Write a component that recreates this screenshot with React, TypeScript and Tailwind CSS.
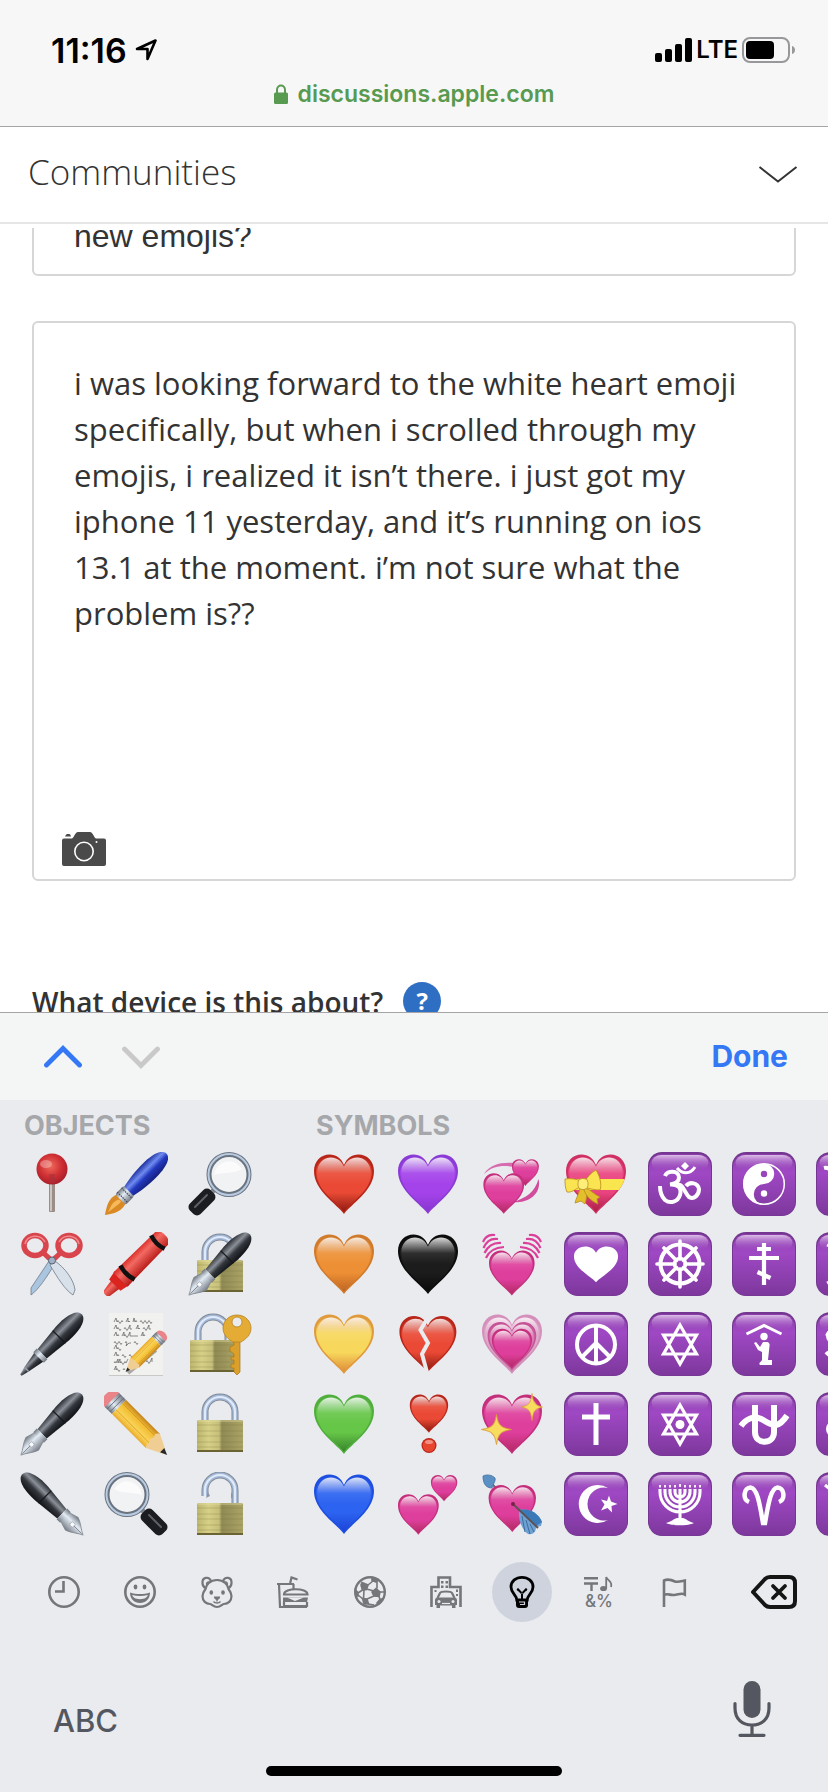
import { useState } from "react";
import type { ReactNode } from "react";

const HEART =
  "M32 62 C25 52 2 39 2 19 C2 9 9 2.5 17.5 2.5 C24 2.5 29.5 6.5 32 13 C34.5 6.5 40 2.5 46.5 2.5 C55 2.5 62 9 62 19 C62 39 39 52 32 62Z";

// [name, edge, main, bottom]
const HEART_COLORS = [
  ["red", "#b8261a", "#ea4a35", "#8f1a10"],
  ["orange", "#d07a2c", "#ed9035", "#bd6423"],
  ["yellow", "#e09a3c", "#f7d75c", "#df8d38"],
  ["green", "#4fae3c", "#66c648", "#36842a"],
  ["blue", "#1f4fe0", "#2c63f0", "#1c44d8"],
  ["purple", "#8a3bd6", "#a443ea", "#8936d2"],
  ["black", "#0c0c0c", "#1c1c1c", "#0a0a0a"],
  ["pink", "#c42f7c", "#de3e9c", "#b42a64"],
  ["pale", "#d58fbb", "#dda6c8", "#c77fa6"],
  ["mid", "#c55597", "#d873b0", "#b64a82"],
  ["rose", "#cf2f62", "#ea4480", "#a81e44"],
];

function SharedDefs() {
  return (
    <svg className="absolute h-0 w-0" aria-hidden="true">
      <defs>
        {HEART_COLORS.map(([name, edge, main, bottom]) => (
          <linearGradient key={name} id={`h-${name}`} x1="0" y1="0" x2="0" y2="1">
            <stop offset="0" stopColor={edge} />
            <stop offset=".3" stopColor={main} />
            <stop offset=".65" stopColor={main} />
            <stop offset="1" stopColor={bottom} />
          </linearGradient>
        ))}
        <linearGradient id="gloss" x1="0" y1="0" x2="0" y2="1">
          <stop offset="0" stopColor="#fff" stopOpacity=".85" />
          <stop offset=".3" stopColor="#fff" stopOpacity=".08" />
          <stop offset=".5" stopColor="#fff" stopOpacity="0" />
        </linearGradient>
        <linearGradient id="tile" x1="0" y1="0" x2="0" y2="1">
          <stop offset="0" stopColor="#8a3fa8" />
          <stop offset=".3" stopColor="#9f48c4" />
          <stop offset="1" stopColor="#7d389c" />
        </linearGradient>
        <linearGradient id="tileGloss" x1="0" y1="0" x2="0" y2="1">
          <stop offset="0" stopColor="#dcbde8" />
          <stop offset="1" stopColor="#a04ac5" stopOpacity="0" />
        </linearGradient>
        <linearGradient id="steel" x1="0" y1="0" x2="1" y2="0">
          <stop offset="0" stopColor="#6f7680" />
          <stop offset=".4" stopColor="#e3ecf5" />
          <stop offset="1" stopColor="#747a84" />
        </linearGradient>
        <linearGradient id="ink" x1="0" y1="0" x2="1" y2="0">
          <stop offset="0" stopColor="#2a2d33" />
          <stop offset=".35" stopColor="#8b9098" />
          <stop offset=".6" stopColor="#33363c" />
          <stop offset="1" stopColor="#101216" />
        </linearGradient>
        <linearGradient id="brass" x1="0" y1="0" x2="1" y2="0">
          <stop offset="0" stopColor="#bdb56f" />
          <stop offset=".25" stopColor="#d6d087" />
          <stop offset=".48" stopColor="#c6bf7a" />
          <stop offset=".54" stopColor="#8f8954" />
          <stop offset="1" stopColor="#aaa466" />
        </linearGradient>
        <linearGradient id="brushBlue" x1="0" y1="0" x2="1" y2="0">
          <stop offset="0" stopColor="#1c2f9e" />
          <stop offset=".35" stopColor="#6f8bf0" />
          <stop offset=".6" stopColor="#2238bd" />
          <stop offset="1" stopColor="#141f7c" />
        </linearGradient>
        <linearGradient id="wax" x1="0" y1="0" x2="1" y2="0">
          <stop offset="0" stopColor="#d92d26" />
          <stop offset=".35" stopColor="#f26a62" />
          <stop offset="1" stopColor="#b81b18" />
        </linearGradient>
        <linearGradient id="wood" x1="0" y1="0" x2="1" y2="0">
          <stop offset="0" stopColor="#e9a929" />
          <stop offset=".3" stopColor="#fbd65a" />
          <stop offset=".7" stopColor="#f2bd35" />
          <stop offset="1" stopColor="#c4831c" />
        </linearGradient>
        <radialGradient id="ball" cx=".45" cy=".4" r=".6">
          <stop offset="0" stopColor="#f06a5c" />
          <stop offset=".6" stopColor="#cf2f33" />
          <stop offset="1" stopColor="#a81f2a" />
        </radialGradient>
        <clipPath id="heartClip">
          <path d={HEART} />
        </clipPath>
      </defs>
    </svg>
  );
}

function Heart({ c, at }: { c: string; at?: string }) {
  const edge = HEART_COLORS.find((h) => h[0] === c)?.[1];
  return (
    <g transform={at}>
      <path d={HEART} fill={edge} />
      <path d={HEART} fill={`url(#h-${c})`} transform="translate(2.2 2.2) scale(.93)" />
      <path d={HEART} fill="url(#gloss)" transform="translate(3.5 3.2) scale(.89)" />
    </g>
  );
}

function Tile({ children }: { children?: ReactNode }) {
  return (
    <>
      <rect width="64" height="64" rx="14" fill="#743690" />
      <rect x="1" y="2" width="62" height="61.5" rx="13" fill="url(#tile)" />
      <rect x="3.5" y="3" width="57" height="16" rx="10" fill="url(#tileGloss)" />
      <g fill="none" stroke="#fff" strokeWidth="4">
        {children}
      </g>
    </>
  );
}

function Nib() {
  return (
    <>
      <path d="M26 50 H38 L41 60 C39 66 34 71 32 76 C30 71 25 66 23 60Z" fill="url(#steel)" stroke="#7b7f85" strokeWidth=".7" />
      <circle cx="32" cy="61" r="2.5" fill="#f8fafc" stroke="#8d9299" strokeWidth=".6" />
      <path d="M32 63 V74" stroke="#7b7f85" strokeWidth=".8" />
    </>
  );
}

function PenBody({ end = 50 }: { end?: number }) {
  return (
    <>
      <path d="M23 22 C21 6 24 -10 32 -10 C40 -10 43 6 41 22Z" fill="url(#ink)" />
      <path d={`M23 22 H41 L38.5 ${end - 4} H25.5Z`} fill="url(#ink)" />
      <path d="M23 22 H41" stroke="#14161a" strokeWidth="1.2" />
      <path d={`M24.5 ${end - 4} H39.5 V${end + 1} H24.5Z`} fill="url(#steel)" />
    </>
  );
}

function FountainPen() {
  return (
    <g transform="rotate(45 32 32)">
      <Nib />
      <PenBody />
    </g>
  );
}

function Padlock({ top = 28 }: { top?: number }) {
  return (
    <>
      <rect x="9" y={top} width="46" height="32" rx="1.5" fill="url(#brass)" />
      <path d={`M9 ${top + 5} H55 M9 ${top + 11} H55 M9 ${top + 16} H55 M9 ${top + 22} H55 M9 ${top + 27} H55`} stroke="#77713c" strokeOpacity=".28" />
      <path d={`M9 ${top + 31} H55`} stroke="#6b6334" strokeWidth="2" />
      <path d={`M10 ${top + 1} H54`} stroke="#e8e3ac" strokeOpacity=".7" />
    </>
  );
}

function Shackle({ d = "M17 28 V20 A15 15 0 0 1 47 20 V28" }: { d?: string }) {
  return (
    <g fill="none">
      <path d={d} stroke="#828a96" strokeWidth="7" />
      <path d={d} stroke="#a3b7d6" strokeWidth="5" />
      <path d={d} stroke="#dfeafa" strokeWidth="2.2" />
    </g>
  );
}

function Magnifier() {
  return (
    <>
      <path d="M29 35 L23 41" stroke="#85898f" strokeWidth="5" />
      <rect x="24.5" y="43" width="15" height="29" rx="5" fill="#1b1d21" transform="rotate(45 32 32)" />
      <path d="M19 43 L7 55" stroke="#5d6066" strokeWidth="2" strokeLinecap="round" />
      <circle cx="41" cy="22.5" r="20" fill="#f1f2f4" stroke="#6a7380" strokeWidth="5" />
      <circle cx="41" cy="22.5" r="20.5" fill="none" stroke="#b9cbe0" strokeWidth="2" />
      <path d="M26 23 A15 15 0 0 1 54 17 C46 22 34 20 26 23Z" fill="#fff" opacity=".7" />
    </>
  );
}

function Pencil() {
  return (
    <>
      <path d="M22 -1 V-3 C22 -13 42 -13 42 -3 V-1Z" fill="#e98489" />
      <path d="M22 -2 H42 V8 H22Z" fill="url(#steel)" />
      <path d="M22 1 H42 M22 5 H42" stroke="#5b6068" strokeWidth=".8" />
      <path d="M22 8 H42 V56 L37 58 L32 56 L27 58 L22 56Z" fill="url(#wood)" />
      <path d="M28 8 V56 M37 8 V56" stroke="#d4951f" strokeWidth=".8" />
      <path d="M22 56 C26 52 28 56 30 53 C32 51 35 56 37 53 C39 52 41 54 42 56 L34 72 H30Z" fill="#f0cd92" />
      <path d="M29 69 H35 L32 76Z" fill="#26282c" />
    </>
  );
}

const OBJECTS: [string, ReactNode][] = [
  [
    "Round pushpin",
    <>
      <rect x="29" y="28" width="6" height="32" rx="1" fill="#9b8d88" />
      <path d="M31 30 V59" stroke="#e0d7d2" strokeWidth="1.5" />
      <circle cx="32" cy="17" r="15.5" fill="url(#ball)" />
      <ellipse cx="26" cy="12" rx="6" ry="4" fill="#fff" opacity=".3" />
      <path d="M29 22 H35 V31 H29Z" fill="#a8303b" opacity=".6" />
    </>,
  ],
  [
    "Scissors",
    <>
      <path d="M29 29 L11 56 L11 63 C18 58 27 45 34 33Z" fill="#a9c5df" stroke="#717b88" strokeWidth=".8" />
      <path d="M35 29 C45 36 54 48 55 58 L53 63 C45 58 37 45 30 33Z" fill="#d8e0ea" stroke="#717b88" strokeWidth=".8" />
      <g fill="none" stroke="#d9454d" strokeWidth="5.5">
        <ellipse cx="15" cy="13.5" rx="11" ry="10" />
        <ellipse cx="49" cy="13.5" rx="11" ry="10" />
        <path d="M23 20 C26 24 28 25 30 27 M41 20 C38 24 36 25 34 27" strokeWidth="5" />
      </g>
      <g fill="none" stroke="#f08a8d" strokeWidth="1.5">
        <path d="M5 12 C7 3 20 1 25 10 M39 10 C44 1 57 3 59 12" />
      </g>
      <circle cx="32" cy="28.5" r="3.5" fill="#9fb2c8" stroke="#5c6572" />
    </>,
  ],
  [
    "Pen",
    <g transform="rotate(45 32 32)">
      <path d="M25.5 50 H38.5 L35 68 L33 76 H31 L29 68Z" fill="url(#ink)" />
      <path d="M29 68 H35" stroke="#999fa8" strokeWidth="1.5" />
      <PenBody />
    </g>,
  ],
  ["Fountain pen", <FountainPen />],
  ["Black nib", <g transform="matrix(-1 0 0 1 64 0)"><FountainPen /></g>],
  [
    "Paintbrush",
    <g transform="rotate(45 32 32)">
      <path d="M26 44 C20 18 21 -11 32 -11 C43 -11 44 18 38 44Z" fill="url(#brushBlue)" />
      <path d="M26 52 C22 62 27 68 32 76 C37 68 42 62 38 52Z" fill="#d98a25" />
      <path d="M31 55 C27 62 31 66 32 72 C33 66 34 60 34 55Z" fill="#f6b95a" />
      <rect x="24.5" y="42" width="15" height="12" rx="2" fill="url(#steel)" />
      <path d="M24.5 45 H39.5 M24.5 51 H39.5" stroke="#4b4f57" strokeWidth="1.2" strokeDasharray="1.5 1" />
    </g>,
  ],
  [
    "Crayon",
    <g transform="rotate(45 32 32)">
      <path d="M26 60 H38 L36 74 C34 76 30 76 28 74Z" fill="url(#wax)" />
      <path d="M22 52 H42 L40 62 H24Z" fill="#d9241f" />
      <path d="M23 -6 C25 -10 39 -10 41 -6 L42 54 H22Z" fill="url(#wax)" />
      <path d="M22.5 1 C28 3 36 3 41.5 1 M22 44 C28 46 36 46 42 44" stroke="#111" strokeWidth="4.5" fill="none" />
    </g>,
  ],
  [
    "Memo",
    <>
      <rect x="5" y="1" width="54" height="63" fill="#f1f1ef" />
      <path d="M5 63.5 H59" stroke="#c9c9c7" />
      <g fill="none" stroke="#5a5a5c" strokeWidth=".7">
        <path d="M10 10 l2 -4 l1 4 q1 -3 2 0 t2 0 t2 0 m3 0 l2 -4 l0 4 q1 -2 2 0 m3 0 l1 -4 l1 4 q1 -3 2 0 m3 0 q1 -3 2 0 t2 0 t2 0 t2 0 t2 0 t2 0" />
        <path d="M10 17 l2 -4 l1 4 q1 -3 2 0 t2 0 m3 0 q1 -3 2 0 t2 0 l2 -4 l0 4 t2 0 m4 0 l2 -4 l0 4 q1 -2 2 0 m3 0 q1 -3 2 0 t2 0 l2 -4 l0 4 t2 0" />
        <path d="M10 24 l2 -4 l1 4 q1 -3 2 0 m3 0 l2 -4 l0 4 q1 -3 2 0 t2 0 l2 -4 l0 4 t2 0 t2 0 t2 0 t2 0 m3 0 l2 -4 l0 4 q1 -3 2 0" />
        <path d="M10 31 q1 -3 2 0 t2 0 t2 0 t2 0 m3 0 q1 -3 2 0 l-1 3 l3 -3 t2 0 m3 0 q1 -3 2 0 t2 0" />
        <path d="M10 37 l2 -4 l1 4 q1 -3 2 0 t2 0" />
        <path d="M10 44 l2 -4 l1 4 q1 -3 2 0 m3 0 q1 -3 2 0 t2 0 m3 0 q1 -3 2 0 t2 0" />
        <path d="M10 51 q1 -3 2 0 l2 -4 l0 4 l2 -4 l0 4 q1 -3 2 0 t2 0 t2 0 l2 -4 M42 50 q1 -3 2 0 t2 0 l2 -4 l0 4" />
        <path d="M10 58 l2 -4 l0 4 q1 -3 2 0 t2 0 m3 0 q1 -3 2 0" />
      </g>
      <path d="M24 61 L52 38" stroke="#000" strokeOpacity=".3" strokeWidth="4" />
      <g transform="translate(41.5 40) rotate(45) scale(.64) translate(-32 -32)">
        <Pencil />
      </g>
    </>,
  ],
  ["Pencil", <g transform="rotate(-45 32 32)"><Pencil /></g>],
  ["Magnifying glass, left", <g transform="matrix(-1 0 0 1 64 0)"><Magnifier /></g>],
  ["Magnifying glass, right", <Magnifier />],
  [
    "Locked with pen",
    <>
      <Shackle />
      <Padlock />
      <FountainPen />
    </>,
  ],
  [
    "Locked with key",
    <>
      <g transform="translate(-7 0)">
        <Shackle />
        <Padlock />
      </g>
      <path d="M46 28 H52 V60 L49 63 L46 60 V56 H43 V52 H46 V48 H43 V45 H46 V42 L42 39 V35 L46 33Z" fill="#dba02c" stroke="#a9761a" strokeWidth=".7" />
      <path d="M49 3 C58 3 63 10 63 16 C63 23 58 27 53 30 H45 C40 27 35 23 35 16 C35 10 40 3 49 3Z M49 5 A5 5 0 1 0 49 15 A5 5 0 1 0 49 5Z" fill="#e5ac35" fillRule="evenodd" stroke="#b98220" strokeWidth=".8" />
    </>,
  ],
  [
    "Locked",
    <>
      <Shackle />
      <Padlock />
    </>,
  ],
  [
    "Unlocked",
    <>
      <Shackle d="M17 24 V18 A15 15 0 0 1 47 18 V31" />
      <path d="M20 20 l2 4 l-4 2Z M43 20 l2 4 l-2 3Z" fill="#8b95a3" />
      <Padlock top={31} />
    </>,
  ],
];

const STAR_OF_DAVID = "M32 13 L48.5 42 H15.5Z M32 52 L15.5 23 H48.5Z";
const SPARK = "M0 -15 C2 -4 4 -2 15 0 C4 2 2 4 0 15 C-2 4 -4 2 -15 0 C-4 -2 -2 -4 0 -15Z";

const SYMBOLS: [string, ReactNode][] = [
  ["Red heart", <Heart c="red" />],
  ["Orange heart", <Heart c="orange" />],
  ["Yellow heart", <Heart c="yellow" />],
  ["Green heart", <Heart c="green" />],
  ["Blue heart", <Heart c="blue" />],
  ["Purple heart", <Heart c="purple" />],
  ["Black heart", <Heart c="black" />],
  [
    "Broken heart",
    <>
      <Heart c="red" at="translate(1.5 1.5) scale(.95)" />
      <path d="M31 7 L24.5 18 L32 31 L26 42 L31.5 62" fill="none" stroke="#e9ebef" strokeWidth="4" />
    </>,
  ],
  [
    "Heart exclamation",
    <>
      <Heart c="red" at="translate(12.5 1) scale(.64)" />
      <circle cx="33" cy="53.5" r="7.5" fill="#b8261a" />
      <circle cx="33" cy="53.5" r="6.3" fill="#e8452f" />
      <ellipse cx="33" cy="50" rx="4" ry="2" fill="#fff" opacity=".4" />
    </>,
  ],
  [
    "Two hearts",
    <>
      <Heart c="pink" at="translate(.6 20.5) scale(.68)" />
      <Heart c="pink" at="translate(34 2) scale(.44)" />
    </>,
  ],
  [
    "Revolving hearts",
    <>
      <path d="M4 22 C10 12 22 10 34 11 V15 C22 13 13 14 4 22Z" fill="#d66cae" />
      <path d="M58.5 27 C62 40 50 52 33 50 C46 46 55 40 58.5 27Z" fill="#d24b9c" />
      <Heart c="pink" at="translate(31 6) scale(.45)" />
      <Heart c="pink" at="translate(2 19.5) scale(.68)" />
    </>,
  ],
  [
    "Beating heart",
    <>
      <g fill="none" stroke="#dc3f9a" strokeWidth="2.2">
        <path d="M3 10 C5 5 9 2 15 3 M3.5 16 C6 10 11 6 18 7 M4.5 21 C8 14 13 10.5 21 11 M6 26 C9 19 14 15.5 24 15" />
        <path d="M61 10 C59 5 55 2 49 3 M60.5 16 C58 10 53 6 46 7 M59.5 21 C56 14 51 10.5 43 11 M58 26 C55 19 50 15.5 40 15" />
      </g>
      <Heart c="pink" at="translate(7.5 16.5) scale(.76)" />
    </>,
  ],
  [
    "Growing heart",
    <>
      <Heart c="pale" />
      <Heart c="mid" at="translate(6 8) scale(.81)" />
      <Heart c="pink" at="translate(10.5 15) scale(.67)" />
    </>,
  ],
  [
    "Sparkling heart",
    <>
      <Heart c="pink" />
      <g fill="#f7dc5e" stroke="#d79a3a" strokeWidth=".9">
        <path d={SPARK} transform="translate(16.5 37.5)" />
        <path d={SPARK} transform="translate(52 15) scale(.7 .9)" />
      </g>
    </>,
  ],
  [
    "Heart with arrow",
    <>
      <path d="M9 9 L20 20" stroke="#6a6c73" strokeWidth="2" />
      <path d="M3 4 C7 2 12 3 15 6 C16 9 13 12 12 16 C7 16 3 13 3 4Z" fill="#5b90c4" stroke="#3f6f9f" strokeWidth=".8" />
      <Heart c="pink" at="translate(7 11) scale(.79)" />
      <path d="M39 38 C48 36 58 40 62 50 L61 54 L56 55 C56 60 53 63 48 62 C42 58 38 48 39 38Z" fill="#6fa2d2" />
      <path d="M39 38 C48 36 58 40 62 50 L56 54Z" fill="#3b7ab9" />
      <path d="M42 44 L45 60 M46 48 L50 62 M50 52 L54 60" stroke="#3b6d9f" strokeWidth="1" />
      <path d="M33 32 L58 56" stroke="#5c5257" strokeWidth="2" />
      <circle cx="33" cy="32" r="2" fill="#7d1f48" />
    </>,
  ],
  [
    "Heart with ribbon",
    <>
      <Heart c="rose" />
      <path d="M0 27 H64 V38 H0Z" fill="#f9e54e" clipPath="url(#heartClip)" />
      <g fill="#e3bf2c" stroke="#b98a1e" strokeWidth=".8">
        <path d="M16 36 C15 42 12 46 11 51 L17 49 L21 52 C23 46 23 41 22 36Z" />
        <path d="M22 36 C27 38 31 43 36 45 L33 47 L34 52 C27 49 22 44 20 38Z" />
        <path d="M17 34 C12 37 7 41 3 40 C1 36 1 31 1 27 C7 26 12 27 17 29Z" fill="#fae452" />
        <path d="M21 29 C24 24 28 20 32 18 C36 24 38 33 36 38 C31 38 26 37 21 35Z" fill="#fae452" />
        <rect x="14" y="26.5" width="10" height="11" rx="4" fill="#fdee7a" />
      </g>
    </>,
  ],
  ["Heart decoration", <Tile><path d={HEART} fill="#fff" stroke="none" transform="translate(8.5 13) scale(.735 .6)" /></Tile>],
  [
    "Peace",
    <Tile>
      <circle cx="32" cy="32.5" r="19" />
      <path d="M32 13 V52 M32 31 L18 45 M32 31 L46 45" />
    </Tile>,
  ],
  ["Latin cross", <Tile><path d="M32 11 V53 M18 25 H46" strokeWidth="5" /></Tile>],
  [
    "Star and crescent",
    <Tile>
      <path d="M44 16 A19 19 0 1 0 44 48 A16.5 16.5 0 1 1 44 16Z M45 23.5 L47 29.5 L53.5 32 L47.5 34 L48 40.5 L43.5 36 L37 38.5 L40.5 32.5 L37 27.5 L43 29Z" fill="#fff" stroke="none" />
    </Tile>,
  ],
  [
    "Om",
    <Tile>
      <path d="M17 24 C19 18 31 18 31 25.5 C31 31 26 32 22 32.5 C30 32 34 36 32 43 C30 50 22 52 17 48 C13 44 12 39 12 34" />
      <path d="M30 33 C34 31 37 41 41 45 C46 48 51 43 51 37 C50 31 42 29 38 34" />
      <path d="M29 16 C34 22 42 23 47 15" strokeWidth="3" />
      <path d="M37 10 L41 14 L37 18 L33 14Z" fill="#fff" stroke="none" />
    </Tile>,
  ],
  [
    "Wheel of dharma",
    <Tile>
      <circle cx="32" cy="32" r="19.5" />
      <circle cx="32" cy="32" r="5.5" strokeWidth="3.5" />
      <path d="M32 9 V27 M32 37 V55 M9 32 H27 M37 32 H55 M16 16 L28.5 28.5 M35.5 35.5 L48 48 M48 16 L35.5 28.5 M28.5 35.5 L16 48" strokeWidth="3.6" strokeLinecap="round" />
    </Tile>,
  ],
  ["Star of David", <Tile><path d={STAR_OF_DAVID} strokeWidth="3.2" /></Tile>],
  [
    "Six pointed star",
    <Tile>
      <path d={STAR_OF_DAVID} strokeWidth="3.2" />
      <circle cx="32" cy="32.5" r="4.5" fill="#fff" stroke="none" />
    </Tile>,
  ],
  [
    "Menorah",
    <Tile>
      <path d="M12 17 V20 A20 20 0 0 0 52 20 V17 M17 17 V20 A15 15 0 0 0 47 20 V17 M22 17 V20 A10 10 0 0 0 42 20 V17 M27 17 V20 A5 5 0 0 0 37 20 V17 M32 17 V48" strokeWidth="3.1" />
      <path d="M12 13 V15.5 M17 13 V15.5 M22 13 V15.5 M27 13 V15.5 M32 12 V15 M37 13 V15.5 M42 13 V15.5 M47 13 V15.5 M52 13 V15.5" strokeWidth="1.8" />
      <path d="M18 51 C23 50 27 46 29 46 H35 C37 46 41 50 46 51 C41 54 23 54 18 51Z" fill="#fff" stroke="none" />
    </Tile>,
  ],
  [
    "Yin yang",
    <Tile>
      <circle cx="32" cy="32" r="20.3" strokeWidth="1.5" />
      <path d="M32 11.5 A20.5 20.5 0 0 0 32 52.5 A10.25 10.25 0 0 1 32 32 A10.25 10.25 0 0 0 32 11.5Z" fill="#fff" stroke="none" />
      <circle cx="32" cy="22" r="3.2" fill="#9845ba" stroke="none" />
      <circle cx="32" cy="41.5" r="3.2" fill="#fff" stroke="none" />
    </Tile>,
  ],
  ["Orthodox cross", <Tile><path d="M32 11 V53 M25 17 H39 M17 26 H47 M25.5 40 L38.5 46" strokeWidth="4.2" /></Tile>],
  [
    "Place of worship",
    <Tile>
      <path d="M14.5 22 L32 13.5 L49.5 22" strokeWidth="3" />
      <circle cx="32" cy="24.5" r="3.7" fill="#fff" stroke="none" />
      <path d="M31 30 H35 C37 30 38 32 37.5 34 L36 48 H40 V53 H28 C26 51 29 50 30 48 L30 40 L26 38 L22 31 L24 30 L28 35Z" fill="#fff" stroke="none" />
    </Tile>,
  ],
  [
    "Ophiuchus",
    <Tile>
      <path d="M23 13 V40 C23 53 42 53 42 40 V13" strokeWidth="6" />
      <path d="M9 34 C14 27 21 24 28 26.5 C34 29 38 33.5 44 33 C49 32 52 28 55 23.5" strokeWidth="6" />
    </Tile>,
  ],
  [
    "Aries",
    <Tile>
      <path d="M17 30 C10 27 12 15.5 18.5 15.5 C25.5 16 28 34 31 51 H33 C36 34 38.5 16 45.5 15.5 C52 15.5 54 27 47 30" strokeWidth="4.5" />
    </Tile>,
  ],
  [
    "Taurus",
    <Tile>
      <path d="M8 16 C16 14 18 26 32 26 C46 26 48 14 56 16" />
      <circle cx="32" cy="39" r="13" />
    </Tile>,
  ],
  ["Gemini", <Tile><path d="M11 13 C22 18 42 18 53 13 M11 51 C22 46 42 46 53 51 M24 17 V47 M40 17 V47" strokeWidth="3" /></Tile>],
  [
    "Cancer",
    <Tile>
      <path d="M53 20 C42 11 16 12 11 24 M10 40 C22 53 50 52 53 39" />
      <circle cx="18" cy="24" r="6" />
      <circle cx="46" cy="39" r="6" />
    </Tile>,
  ],
  [
    "Leo",
    <Tile>
      <circle cx="18.5" cy="37" r="6.5" />
      <path d="M24 34 C20 26 20 14 31 13 C46 13 42 30 38 40 C35 52 45 54 50 46" />
    </Tile>,
  ],
  ["Virgo", <Tile><path d="M9 13 L15 18 V46 M15 22 C18 12 26 14 26 20 V46 M26 22 C29 12 37 14 37 20 V44 C38 50 44 52 50 54 M37 26 C46 16 54 28 48 36 C44 44 38 48 32 52" strokeWidth="3" /></Tile>],
];

const CATEGORIES: [string, ReactNode][] = [
  [
    "Recent",
    <>
      <circle cx="16" cy="16" r="14.7" />
      <path d="M15.5 5 V15.5 H7" />
    </>,
  ],
  [
    "Smileys",
    <>
      <circle cx="16" cy="16" r="14.7" />
      <g fill="currentColor" stroke="none">
        <ellipse cx="11.5" cy="11" rx="1.9" ry="2.4" />
        <ellipse cx="20.5" cy="11" rx="1.9" ry="2.4" />
        <path d="M6 16.5 C12 18.5 20 18.5 26 16.5 C26 23 21.5 27 16 27 C10.5 27 6 23 6 16.5Z M8.2 19 C9 21.5 11 23 16 23.2 C21 23 23 21.5 23.8 19 C19 20.2 13 20.2 8.2 19Z" fillRule="evenodd" />
      </g>
    </>,
  ],
  [
    "Animals",
    <g strokeWidth="2.2">
      <path d="M10 5 C8 0 1 1 1.5 7 C1.5 9 2.5 11 4.5 12 M22 5 C24 0 31 1 30.5 7 C30.5 9 29.5 11 27.5 12" />
      <path d="M6 9 C5 8 6 5.5 8.5 6 M26 9 C27 8 26 5.5 23.5 6" strokeWidth="1.5" />
      <path d="M16 4 C9 4 5 9 4.5 13 C3 15 1.5 17 1.5 20 C1.5 25 5 28 9 28 C11 28 12 31 16 31 C20 31 21 28 23 28 C27 28 30.5 25 30.5 20 C30.5 17 29 15 27.5 13 C27 9 23 4 16 4Z" />
      <g fill="currentColor" stroke="none">
        <ellipse cx="10.3" cy="16.5" rx="1.8" ry="2.3" />
        <ellipse cx="22" cy="16.5" rx="1.8" ry="2.3" />
        <path d="M13 20.5 H19 C19.5 22.5 17 24 16 24 C15 24 12.5 22.5 13 20.5Z" />
      </g>
      <path d="M16 23 V25.5 M12.5 25.5 C14 27.5 18 27.5 19.5 25.5" strokeWidth="1.4" />
    </g>,
  ],
  [
    "Food",
    <g strokeWidth="2.2">
      <path d="M0 8 H17 M2 8 L3 31 H30 M13 8 L14.5 1.5 L20.5 3.5 M16.5 8 V13" />
      <path d="M7 18.5 C7 11.5 30.5 11.5 30.5 18.5 Z" />
      <path d="M6 21.5 H31 L30 26 H6Z" fill="currentColor" stroke="none" />
      <path d="M10 21.5 L18 25 L27 21.5Z" fill="#e9ebef" stroke="none" />
      <path d="M7 26 V30 H30 V26" />
    </g>,
  ],
  [
    "Activity",
    <g strokeWidth="1.6">
      <circle cx="16" cy="16" r="14.8" strokeWidth="2.4" />
      <g fill="currentColor">
        <path d="M18 16 L22 12.5 L26 16 L25 20.5 L20 20Z M8 6.5 L14 9 L12.5 13.5 L8.5 14 L7 9Z M8.5 22.5 L13 23 L14.5 28 L10 28Z M18 1.5 L24 3.5 L22 6 L18 4.5Z M1.5 14 L4 16.5 L4 20 L2 20Z M23 27 L26 23.5 L28 23 L25 28Z" />
      </g>
      <path d="M14 9 L19 5 M12.5 13 L20 15 M8.5 14 L4 17 M10 14 L9.5 23 M4 19 L9 23 M13 23 L20 20 M23 12.5 V5 M26 16 H30 M25 20 L26 24 M14 28 L20 29" />
    </g>,
  ],
  [
    "Travel",
    <>
      <path d="M1.5 31 V11 H8.5 V1.5 H20 V11 H30.5 V31" />
      <path d="M11 5 h2.5 v2.5 h-2.5Z M15.5 5 h2.5 v2.5 h-2.5Z M11 9.5 h2.5 v2.5 h-2.5Z M15.5 9.5 h2.5 v2.5 h-2.5Z M4.5 14 h2 v2 h-2Z M26 13.5 h2 v2.5 h-2Z M26 18 h2 v2 h-2Z" fill="currentColor" stroke="none" />
      <path d="M7.5 22 L10 17 C11 15 21 15 22 17 L24.5 22" strokeWidth="2.2" />
      <path d="M5 24 C5 22 7 21.5 8 21.5 H24 C25 21.5 27 22 27 24 V29 H25.5 V32 H22 V29.5 H10 V32 H6.5 V29 H5Z" fill="currentColor" stroke="none" />
      <circle cx="9" cy="25.5" r="1.5" fill="#e9ebef" stroke="none" />
      <circle cx="23" cy="25.5" r="1.5" fill="#e9ebef" stroke="none" />
      <path d="M12 27.5 H20" stroke="#e9ebef" strokeWidth="1.2" />
    </>,
  ],
  [
    "Objects",
    <>
      <path d="M10.8 24 C10.8 19 5 17.5 5 11 C5 5 10 1.3 16 1.3 C22 1.3 27 5 27 11 C27 17.5 21.2 19 21.2 24Z" strokeWidth="2.8" />
      <path d="M10 23 H22 V29 C22 31 21 32 19 32 H13 C11 32 10 31 10 29Z" fill="currentColor" stroke="none" />
      <path d="M13 26 H18.5 V28.5 H14" stroke="#ced3dd" strokeWidth="1.2" />
      <path d="M16 23 V17.5 M12 13.5 L15.5 17 M20 13.5 L16.5 17" strokeWidth="2" />
      <circle cx="12" cy="13.5" r="1.2" fill="currentColor" stroke="none" />
      <circle cx="20" cy="13.5" r="1.2" fill="currentColor" stroke="none" />
    </>,
  ],
  [
    "Symbols",
    <>
      <path d="M1 2.2 H15 M1 7.5 H15 M8.5 7.5 V15" strokeWidth="2.4" />
      <ellipse cx="20.5" cy="12.5" rx="3.4" ry="2.6" fill="currentColor" stroke="none" />
      <path d="M23.2 12.5 V1 C24 4.5 30 5 28 11" strokeWidth="1.8" />
      <text x="16" y="31" textAnchor="middle" fontSize="17" fontFamily="Inter, sans-serif" fontWeight="500" fill="currentColor" stroke="none">
        &amp;%
      </text>
    </>,
  ],
  [
    "Flags",
    <path d="M5 31 V4.5 C9 2.5 13 4 16 5.5 C19 6.5 23 5 25.8 4.5 V18.5 C22 16.5 19 19 15 19 C11 19.5 9 17 5 19" />,
  ],
];

function EmojiGroup({ title, items }: { title: string; items: [string, ReactNode][] }) {
  return (
    <section className="flex shrink-0 flex-col gap-2">
      <h2 className="px-1 text-[27px] leading-9 font-bold text-[#a6a7aa]">{title}</h2>
      <div className="grid grid-flow-col grid-rows-5 gap-x-5 gap-y-4">
        {items.map(([label, art]) => (
          <button key={label} type="button" aria-label={label} className="h-16 w-16">
            <svg viewBox="0 0 64 64" className="h-16 w-16">
              {art}
            </svg>
          </button>
        ))}
      </div>
    </section>
  );
}

function StatusBar() {
  return (
    <header className="border-b border-[#a5a5a7] bg-[#f7f7f7] pt-[30px] pb-4">
      <div className="flex h-10 items-center justify-between pr-8 pl-[51px]">
        <div className="flex items-center gap-2 text-[34px] font-semibold text-black">
          11:16
          <svg viewBox="0 0 22 22" className="h-[22px] w-[22px]">
            <path d="M20.5 1.5 L12.5 20 V10 H2Z" fill="none" stroke="#000" strokeWidth="2.6" strokeLinejoin="round" />
          </svg>
        </div>
        <div className="flex items-center gap-1 text-2xl font-semibold text-black">
          <svg viewBox="0 0 37 24" className="h-6 w-[37px]">
            <rect x="0" y="15" width="7" height="9" rx="2" />
            <rect x="10" y="11" width="7" height="13" rx="2" />
            <rect x="20" y="6" width="7" height="18" rx="2" />
            <rect x="30" y="0" width="7" height="24" rx="2" />
          </svg>
          LTE
          <svg viewBox="0 0 54 26" className="h-[26px] w-[54px]">
            <rect x="1" y="1" width="46" height="24" rx="7" fill="none" stroke="#98989a" strokeWidth="2" />
            <rect x="4" y="4" width="28" height="18" rx="4" />
            <path d="M50 9 C54 10 54 16 50 17Z" fill="#98989a" />
          </svg>
        </div>
      </div>
      <div className="mt-2 flex h-8 items-center justify-center gap-2.5 text-[23px] font-semibold text-[#579a50]">
        <svg viewBox="0 0 14 20" className="h-5 w-3.5">
          <rect x="0" y="8.5" width="14" height="11.5" rx="1.5" fill="currentColor" />
          <path d="M3 9.5 V6 C3 0 11 0 11 6 V9.5" fill="none" stroke="currentColor" strokeWidth="2" />
        </svg>
        discussions.apple.com
      </div>
    </header>
  );
}

export default function App() {
  const [category, setCategory] = useState("Objects");

  return (
    <div className="flex min-h-screen flex-col overflow-hidden bg-white font-[Inter,'Liberation_Sans',sans-serif]">
      <SharedDefs />
      <StatusBar />

      <div className="flex h-[97px] items-center justify-between border-b-2 border-[#e6e6e6] pr-[30px] pl-7 font-['Open_Sans',sans-serif]">
        <h1 className="pb-1 text-[35px] font-light text-[#333]">Communities</h1>
        <button type="button" aria-label="Show communities menu">
          <svg viewBox="0 0 40 20" className="h-5 w-10">
            <path d="M1.5 2 L20 16.5 L38.5 2" fill="none" stroke="#333" strokeWidth="2" />
          </svg>
        </button>
      </div>

      <main className="flex flex-col px-8 pt-1 font-['Open_Sans',sans-serif] text-[#333]">
        <div className="flex h-12 flex-col justify-end overflow-hidden">
          <textarea
            aria-label="Question title"
            defaultValue="new emojis?"
            rows={1}
            className="block w-full shrink-0 resize-none overflow-hidden rounded-md border-2 border-[#d6d6d6] px-10 pt-10 pb-[18px] font-['Liberation_Sans',sans-serif] text-[32px] leading-[40px] outline-none"
          />
        </div>

        <div className="mt-[45px] rounded-md border-2 border-[#d6d6d6] pb-[13px]">
          <textarea
            aria-label="Question details"
            rows={10}
            className="block w-full resize-none overflow-hidden px-10 pt-[37px] text-[31px] leading-[46px] outline-none"
            defaultValue="i was looking forward to the white heart emoji specifically, but when i scrolled through my emojis, i realized it isn’t there. i just got my iphone 11 yesterday, and it’s running on ios 13.1 at the moment. i’m not sure what the problem is??"
          />
          <button type="button" aria-label="Add image" className="mt-3 ml-7 block">
            <svg viewBox="0 0 44 34" className="h-[34px] w-11">
              <path d="M2 6.5 H10 C12 6 13 0 16 0 H28 C31 0 32 6 34 6.5 H42 Q44 6.5 44 8.5 V32 Q44 34 42 34 H2 Q0 34 0 32 V8.5 Q0 6.5 2 6.5Z" fill="#4a4a4a" />
              <path d="M3 4.5 Q4 2 5 2 H7.5 Q8.5 2 9 4.5Z" fill="#4a4a4a" />
              <circle cx="22" cy="19.5" r="9.2" fill="none" stroke="#fff" strokeWidth="1.6" />
              <circle cx="34.5" cy="10" r="1" fill="#fff" />
            </svg>
          </button>
        </div>

        <div className="mt-[101px] flex h-[30px] items-start gap-5 overflow-hidden">
          <h2 className="text-[28px] leading-[40px] font-semibold">What device is this about?</h2>
          <button
            type="button"
            aria-label="Help"
            className="h-[38px] w-[38px] shrink-0 rounded-full bg-[#2e6fc4] text-2xl leading-[38px] font-bold text-white"
          >
            ?
          </button>
        </div>
      </main>

      <div className="flex h-[88px] items-center border-t border-[#a5a5a7] bg-[#f4f5f5] pr-10 pl-11">
        <button type="button" aria-label="Previous field">
          <svg viewBox="0 0 38 24" className="h-6 w-[38px]">
            <path d="M2.5 20 L19 3.5 L35.5 20" fill="none" stroke="#3478f6" strokeWidth="4.8" strokeLinecap="round" />
          </svg>
        </button>
        <button type="button" aria-label="Next field" className="ml-10">
          <svg viewBox="0 0 38 24" className="h-6 w-[38px]">
            <path d="M2.5 4 L19 20.5 L35.5 4" fill="none" stroke="#c9c9c9" strokeWidth="4.8" strokeLinecap="round" />
          </svg>
        </button>
        <button type="button" className="ml-auto text-[30px] font-bold text-[#3478f6]">
          Done
        </button>
      </div>

      <div className="flex grow flex-col bg-[#e9ebef] pt-2 pb-4">
        <div className="flex gap-[60px] overflow-hidden pl-5">
          <EmojiGroup title="OBJECTS" items={OBJECTS} />
          <EmojiGroup title="SYMBOLS" items={SYMBOLS} />
        </div>

        <div className="mt-[26px] flex items-center gap-[46px] pr-[31px] pl-[34px]">
          <nav className="flex grow justify-between">
            {CATEGORIES.map(([label, art]) => (
              <button
                key={label}
                type="button"
                aria-label={label}
                onClick={() => setCategory(label)}
                className={`flex h-15 w-15 items-center justify-center rounded-full ${
                  category === label ? "bg-[#ced3dd] text-black" : "text-[#757679]"
                }`}
              >
                <svg viewBox="0 0 32 32" className="h-8 w-8 overflow-visible" fill="none" stroke="currentColor" strokeWidth="2.6">
                  {art}
                </svg>
              </button>
            ))}
          </nav>
          <button type="button" aria-label="Delete">
            <svg viewBox="0 0 46 34" className="h-[34px] w-[46px]" fill="none" stroke="#151515" strokeLinejoin="round">
              <path d="M2 17 L14 4 Q16 2 19 2 H38 Q44 2 44 8 V26 Q44 32 38 32 H19 Q16 32 14 30Z" strokeWidth="4" />
              <path d="M22 11 L34 23 M34 11 L22 23" strokeWidth="3.8" strokeLinecap="round" />
            </svg>
          </button>
        </div>

        <div className="mt-[59px] flex items-end justify-between pr-[57px] pl-[53px] text-[#54575f]">
          <button type="button" className="text-[31px] leading-8 font-medium">
            ABC
          </button>
          <button type="button" aria-label="Dictate">
            <svg viewBox="0 0 38 56" className="h-14 w-[38px]" fill="none" stroke="currentColor" strokeLinecap="round">
              <rect x="10.5" y="0" width="17" height="37" rx="8.5" fill="currentColor" stroke="none" />
              <path d="M2 22.5 V27 C2 38 9 44 19 44 C29 44 36 38 36 27 V22.5 M19 44 V54 M7 54.3 H31" strokeWidth="3.2" />
            </svg>
          </button>
        </div>

        <div className="mx-auto mt-[29px] h-2.5 w-[296px] rounded-full bg-black" />
      </div>
    </div>
  );
}
